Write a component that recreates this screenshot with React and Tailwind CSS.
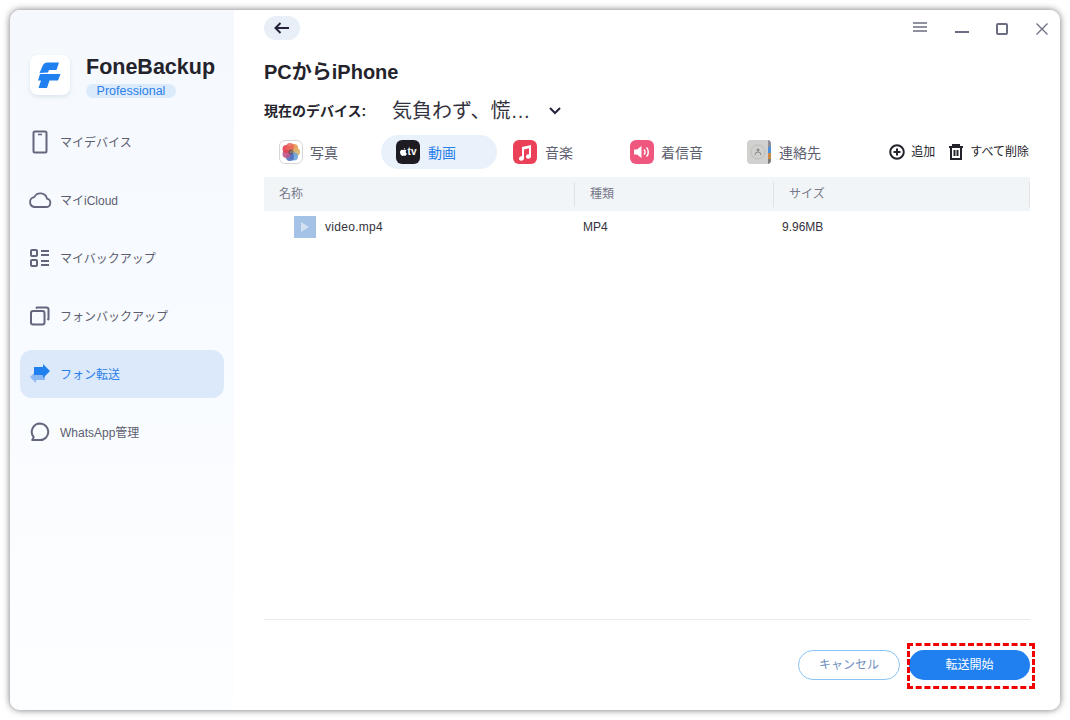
import React from 'react';

const FONT = 'font-["Liberation_Sans","Noto_Sans_CJK_JP",sans-serif]';

// --- Sidebar icons ---
const PhoneIcon = () => (
    <svg width="20" height="24" viewBox="0 0 20 24" fill="none" stroke="#63667c" strokeWidth="2">
        <rect x="3.5" y="1.5" width="13" height="21" rx="1.5" />
        <path d="M8 4.5h4" strokeWidth="1.5" />
    </svg>
);
const CloudIcon = () => (
    <svg width="24" height="18" viewBox="0 0 24 18" fill="none" stroke="#63667c" strokeWidth="1.8">
        <path d="M6.5 16h11.5a4.2 4.2 0 0 0 1-8.3A6.8 6.8 0 0 0 6.300 6.100 5 5 0 0 0 6.500 16z" strokeLinejoin="round" />
    </svg>
);
const ListIcon = () => (
    <svg width="20" height="18" viewBox="0 0 20 18" fill="none" stroke="#63667c" strokeWidth="2">
        <rect x="1" y="1" width="6" height="6" rx="1" />
        <rect x="1" y="11" width="6" height="6" rx="1" />
        <path d="M11 2h8M11 6h8M11 12h8M11 16h8" />
    </svg>
);
const CopyIcon = () => (
    <svg width="20" height="20" viewBox="0 0 20 20" fill="none" stroke="#63667c" strokeWidth="2">
        <rect x="1" y="5" width="13.500" height="13.500" rx="2" />
        <path d="M6 2.500 7 1.500h9.500a2 2 0 0 1 2 2V13l-1 1" />
    </svg>
);
const TransferIcon = () => (
    <svg width="22" height="20" viewBox="0 0 22 20">
        <path d="M1 13 7 7v3h9v6H7v3z" fill="#8cb8f4" />
        <path d="M21 7 14 0v3H5v8h9v3z" fill="#2080f0" />
    </svg>
);
const ChatIcon = () => (
    <svg width="20" height="20" viewBox="0 0 20 20" fill="none" stroke="#63667c" strokeWidth="2">
        <path d="M10 1.500a8.300 8.300 0 0 1 0 16.600H2.200l1.500-3A8.300 8.300 0 0 1 10 1.500z" strokeLinejoin="round" />
    </svg>
);

// --- Tab icons ---
const PhotosIcon = () => (
    <div className="w-6 h-6 rounded-md border border-[#d6d6d6] bg-white flex items-center justify-center">
        <svg width="20" height="20" viewBox="0 0 20 20">
            <circle cx="13" cy="6" r="4" fill="#eba35f" />
            <circle cx="15" cy="10" r="4" fill="#d8b06a" opacity="0.9" />
            <circle cx="13" cy="14.500" r="4" fill="#6fa3dc" opacity="0.9" />
            <circle cx="9" cy="15" r="4" fill="#4f6fc0" opacity="0.9" />
            <circle cx="5.500" cy="12" r="4" fill="#c0568a" opacity="0.9" />
            <circle cx="5.500" cy="7" r="4" fill="#e2404f" opacity="0.9" />
            <circle cx="9" cy="5" r="4" fill="#e8665a" opacity="0.85" />
            <circle cx="10" cy="10" r="2.500" fill="#5a4a50" opacity="0.7" />
        </svg>
    </div>
);
const TvIcon = () => (
    <div className="w-6 h-6 rounded-md bg-[#1e1b22] flex items-center justify-center gap-px text-white">
        <svg width="7" height="9" viewBox="0 0 7 9" fill="#fff">
            <path d="M5.100 0c.1.700-.600 1.600-1.400 1.600C3.600.900 4.400.100 5.100 0zM3.600 2.100c.4 0 .8-.3 1.400-.3.500 0 1.100.3 1.500.8-1.200.7-1 2.500.4 3-.3.800-1 2.300-1.800 2.300-.5 0-.8-.3-1.300-.3s-.8.3-1.300.3C1.400 7.900 0 5.900 0 4.200 0 2.700 1 1.800 2 1.800c.6 0 1.100.3 1.600.3z" />
        </svg>
        <span className="text-[10px] leading-none font-bold">tv</span>
    </div>
);
const MusicIcon = () => (
    <div className="w-6 h-6 rounded-md bg-[#ea4058] flex items-center justify-center">
        <svg width="14" height="17" viewBox="0 0 14 17" fill="#fff">
            <path d="M4 3 13 1v11.500a2.500 2.200 0 1 1-2-2.200V4.300L6 5.500v9a2.500 2.200 0 1 1-2-2.200z" />
        </svg>
    </div>
);
const RingIcon = () => (
    <div className="w-6 h-6 rounded-md bg-[#f0577f] flex items-center justify-center">
        <svg width="18" height="14" viewBox="0 0 18 14" fill="none">
            <path d="M1 4.500h3L8.500 1v12L4 9.500H1z" fill="#fff" />
            <path d="M11 4.500a3.500 3.500 0 0 1 0 5M13.500 2.500a6.500 6.500 0 0 1 0 9" stroke="#fff" strokeWidth="1.500" />
        </svg>
    </div>
);
const ContactsIcon = () => (
    <div className="w-6 h-6 rounded-sm bg-[#d0d0ce] flex overflow-hidden">
        <div className="flex-1 flex items-center justify-center">
            <svg width="16" height="16" viewBox="0 0 16 16" fill="none">
                <circle cx="8" cy="8" r="7" stroke="#bdbdb9" strokeWidth="1" />
                <circle cx="8" cy="6" r="1.500" fill="#8a8a86" />
                <path d="M5 11a3 3 0 0 1 6 0" stroke="#8a8a86" strokeWidth="1" />
            </svg>
        </div>
        <div className="w-[3px] flex flex-col">
            <div className="h-[7px] bg-[#8a8f98]" />
            <div className="h-[6px] bg-[#4e8fdc]" />
            <div className="h-[6px] bg-[#c98a45]" />
            <div className="flex-1 bg-[#7b7b7b]" />
        </div>
    </div>
);

const NAV_ITEMS = [
    { label: 'マイデバイス', icon: <PhoneIcon /> },
    { label: 'マイiCloud', icon: <CloudIcon /> },
    { label: 'マイバックアップ', icon: <ListIcon /> },
    { label: 'フォンバックアップ', icon: <CopyIcon /> },
    { label: 'フォン転送', icon: <TransferIcon />, active: true },
    { label: 'WhatsApp管理', icon: <ChatIcon /> },
];

const TABS = [
    { label: '写真', icon: <PhotosIcon />, width: 'w-[117px] pl-[15px] gap-[7px]' },
    { label: '動画', icon: <TvIcon />, width: 'w-[116px] pl-[15px] gap-[8px]', active: true },
    { label: '音楽', icon: <MusicIcon />, width: 'w-[117px] pl-[16px] gap-[8px]' },
    { label: '着信音', icon: <RingIcon />, width: 'w-[117px] pl-[16px] gap-[7px]' },
    { label: '連絡先', icon: <ContactsIcon />, width: 'w-[100px] pl-[16px] gap-[8px]' },
];

function Sidebar() {
    return (
        <div className="w-[224px] shrink-0 flex flex-col px-[10px] bg-gradient-to-b from-[#f5f9fd] via-[#f8fbff] to-[#fdfeff]">
            <div className="flex items-start pl-[10px] pt-[45px] h-[108px]">
                <div className="w-10 h-10 rounded-lg bg-white shadow-[0_2px_4px_rgba(40,70,120,0.12)] flex items-center justify-center">
                    <svg width="24" height="28" viewBox="0 0 24 28" fill="#2080f0">
                        <path d="M1.500 12 5 4Q6 1.500 9 1.500H21L18.500 9H11L10 11.500z" />
                        <path d="M2 13H22.500L20 19.500H11.500L9 27H.500L3 19.500H0z" />
                    </svg>
                </div>
                <div className="ml-4 flex flex-col items-start -mt-px">
                    <div className="text-[21.5px] leading-[26px] font-bold text-[#24232b]">FoneBackup</div>
                    <div className="mt-[4px] w-[90px] h-[14px] rounded-full bg-[#dcebfc] text-[#2a80ea] text-[12.5px] leading-[14px] text-center">Professional</div>
                </div>
            </div>
            <div className="flex flex-col gap-[10px]">
                {NAV_ITEMS.map(item => (
                    <div
                        key={item.label}
                        className={`h-12 rounded-xl flex items-center text-xs ${item.active ? 'bg-[#dce9fb] text-[#2a80ea]' : 'text-[#5c5e70]'}`}
                    >
                        <div className="w-10 flex justify-center">{item.icon}</div>
                        <span className="pt-[2px]">{item.label}</span>
                    </div>
                ))}
            </div>
        </div>
    );
}

function WindowControls() {
    return (
        <div className="flex items-start text-[#6b6e83]">
            <svg className="mt-[6px]" width="14" height="10" viewBox="0 0 14 10" stroke="#6b6e83" strokeWidth="1.500">
                <path d="M0 1h14M0 5h14M0 9h14" />
            </svg>
            <svg className="ml-[28px] mt-[15px]" width="14" height="2" viewBox="0 0 14 2" stroke="#6b6e83" strokeWidth="2">
                <path d="M0 1h14" />
            </svg>
            <svg className="ml-[27px] mt-[7px]" width="12" height="12" viewBox="0 0 12 12" fill="none" stroke="#6b6e83" strokeWidth="2">
                <rect x="1" y="1" width="10" height="10" rx="1" />
            </svg>
            <svg className="ml-[28px] mt-[7px]" width="12" height="12" viewBox="0 0 12 12" fill="none" stroke="#6b6e83" strokeWidth="1.300">
                <path d="m.5.500 11 11M11.500.500l-11 11" />
            </svg>
        </div>
    );
}

function App() {
    return (
        <div className={`w-[1070px] h-[720px] p-[10px] bg-white overflow-hidden ${FONT}`}>
            <div className="w-full h-full flex bg-white rounded-[10px] overflow-hidden shadow-[0_0_7px_rgba(0,0,0,0.55)]">
                <Sidebar />
                <div className="flex-1 flex flex-col pl-[30px] pr-[30px] bg-white">
                    {/* Top bar */}
                    <div className="flex justify-between items-start pt-[6px] h-[30px] -mr-[18px]">
                        <div className="w-9 h-6 rounded-full bg-[#e9eff6] flex items-center justify-center">
                            <svg width="16" height="12" viewBox="0 0 16 12" fill="none" stroke="#25233a" strokeWidth="2">
                                <path d="M15 6H2M6.500 1 1.500 6l5 5" />
                            </svg>
                        </div>
                        <WindowControls />
                    </div>

                    <h1 className="mt-[20px] text-xl leading-6 font-bold text-[#24232b]">PCからiPhone</h1>

                    <div className="mt-[15px] flex items-center h-6">
                        <span className="w-[128px] text-sm font-bold text-[#24232b]">現在のデバイス:</span>
                        <span className="text-xl text-[#33323c]">気負わず、慌…</span>
                        <svg className="ml-[18px]" width="12" height="8" viewBox="0 0 12 8" fill="none" stroke="#25233a" strokeWidth="2">
                            <path d="m1 1 5 5 5-5" />
                        </svg>
                    </div>

                    {/* Tabs */}
                    <div className="mt-3 flex items-center h-[34px]">
                        {TABS.map(tab => (
                            <div
                                key={tab.label}
                                className={`${tab.width} h-[34px] flex items-center shrink-0 text-sm ${tab.active ? 'bg-[#e9f1fa] rounded-full text-[#2a80ea]' : 'text-[#5c5e70]'}`}
                            >
                                {tab.icon}
                                <span className="pt-[2px]">{tab.label}</span>
                            </div>
                        ))}
                        <div className="ml-auto mr-px flex items-center text-xs text-[#24232b]">
                            <svg width="16" height="16" viewBox="0 0 16 16" fill="none" stroke="#24232b" strokeWidth="2">
                                <circle cx="8" cy="8" r="6.800" />
                                <path d="M8 4.500v7M4.500 8h7" />
                            </svg>
                            <span className="ml-[6px]">追加</span>
                            <svg className="ml-[13px]" width="16" height="16" viewBox="0 0 16 16" fill="none" stroke="#24232b" strokeWidth="2">
                                <path d="M1 3h14M5 3V1h6v2M3 3v12h10V3M6.500 6v6M9.500 6v6" />
                            </svg>
                            <span className="ml-[6px]">すべて削除</span>
                        </div>
                    </div>

                    {/* File table */}
                    <div className="mt-2 h-[34px] flex items-center bg-[#f2f5f8] text-xs text-[#77798a]">
                        <div className="w-[311px] h-[25px] pl-[15px] flex items-center border-r border-[#dfe3e8]">名称</div>
                        <div className="w-[199px] h-[25px] pl-[15px] flex items-center border-r border-[#dfe3e8]">種類</div>
                        <div className="flex-1 h-[25px] pl-[15px] flex items-center border-r border-[#dfe3e8]">サイズ</div>
                    </div>
                    <div className="h-8 flex items-center text-xs text-[#33323c]">
                        <div className="w-[311px] pl-[30px] flex items-center">
                            <div className="w-[22px] h-[22px] bg-[#a3c2e6] flex items-center justify-center">
                                <svg width="10" height="12" viewBox="0 0 10 12" fill="#d3e1f1">
                                    <path d="M1 1v10l8-5z" />
                                </svg>
                            </div>
                            <span className="ml-[9px] tracking-[0.3px]">video.mp4</span>
                        </div>
                        <div className="w-[199px] pl-[8px]">MP4</div>
                        <div className="flex-1 pl-[8px]">9.96MB</div>
                    </div>

                    <div className="flex-1" />

                    {/* Footer */}
                    <div className="h-[91px] border-t border-[#e6e9ef] flex justify-end pt-[30px]">
                        <div className="w-[102px] h-[30px] rounded-full border border-[#8cc4f5] flex items-center justify-center text-xs text-[#6f8fc0]">キャンセル</div>
                        <div className="relative ml-[9px] w-[121px] h-[30px] rounded-full bg-[#2080f0] flex items-center justify-center text-xs text-white">
                            転送開始
                            <div className="absolute -left-[2px] -right-[5px] -top-[7px] -bottom-[9px] border-[3px] border-dashed border-[#f00000]" />
                        </div>
                    </div>
                </div>
            </div>
        </div>
    );
}

export default App;
